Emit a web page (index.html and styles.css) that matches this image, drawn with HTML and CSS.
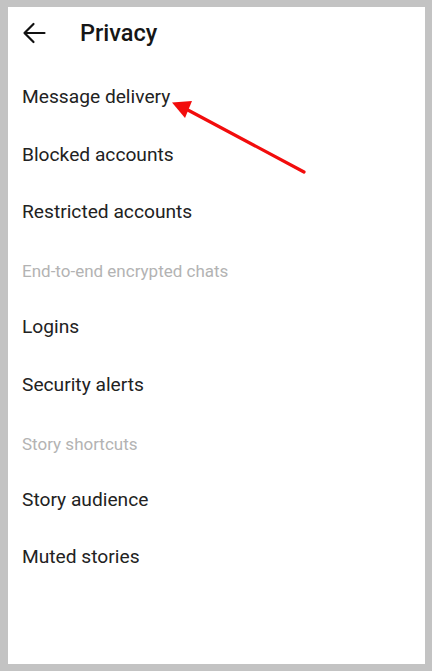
FILE: index.html
```html
<!DOCTYPE html>
<html>
<head>
<meta charset="utf-8">
<link rel="stylesheet" href="styles.css">
</head>
<body>
<div class="frame">
  <div class="screen">
    <header class="topbar">
      <svg class="back" width="24" height="24" viewBox="0 0 24 24"><path d="M22.5 12H2.5M11.5 3l-9 9 9 9" fill="none" stroke="#111" stroke-width="2.2" stroke-linecap="round" stroke-linejoin="round"/></svg>
      <h1 class="title">Privacy</h1>
    </header>
    <ul class="list">
      <li class="item">Message delivery</li>
      <li class="item">Blocked accounts</li>
      <li class="item">Restricted accounts</li>
      <li class="section">End-to-end encrypted chats</li>
      <li class="item">Logins</li>
      <li class="item">Security alerts</li>
      <li class="section">Story shortcuts</li>
      <li class="item">Story audience</li>
      <li class="item">Muted stories</li>
    </ul>
    <svg class="pointer" width="432" height="200" viewBox="0 0 432 200">
      <line x1="304" y1="172" x2="186" y2="109" stroke="#f20c0c" stroke-width="3.2" stroke-linecap="round"/>
      <polygon points="172,102.5 192,101 185,118" fill="#f20c0c"/>
    </svg>
  </div>
</div>
</body>
</html>
```
FILE: styles.css
```css
html, body { margin: 0; padding: 0; }
body {
  background: #c3c3c3;
  font-family: Roboto, "Noto Sans", sans-serif;
}
.frame {
  padding: 7px 7px 7px 8px;
  height: 671px;
  box-sizing: border-box;
}
.screen {
  position: relative;
  background: #fff;
  height: 100%;
}
.topbar {
  display: flex;
  align-items: center;
  height: 52px;
  padding-left: 14px;
}
.back { display: block; }
.title {
  margin: 0 0 0 34px;
  font-size: 23.5px;
  font-weight: 500;
  color: #161616;
}
.list {
  list-style: none;
  margin: 0;
  padding: 9px 0 0 14px;
}
.item {
  height: 57.5px;
  display: flex;
  align-items: center;
  font-size: 19.2px;
  color: #222;
}
.section {
  height: 57.5px;
  box-sizing: border-box;
  padding-top: 4px;
  display: flex;
  align-items: center;
  font-size: 17px;
  color: #b3b3b3;
}
.pointer {
  position: absolute;
  left: -8px;
  top: -7px;
}
```
